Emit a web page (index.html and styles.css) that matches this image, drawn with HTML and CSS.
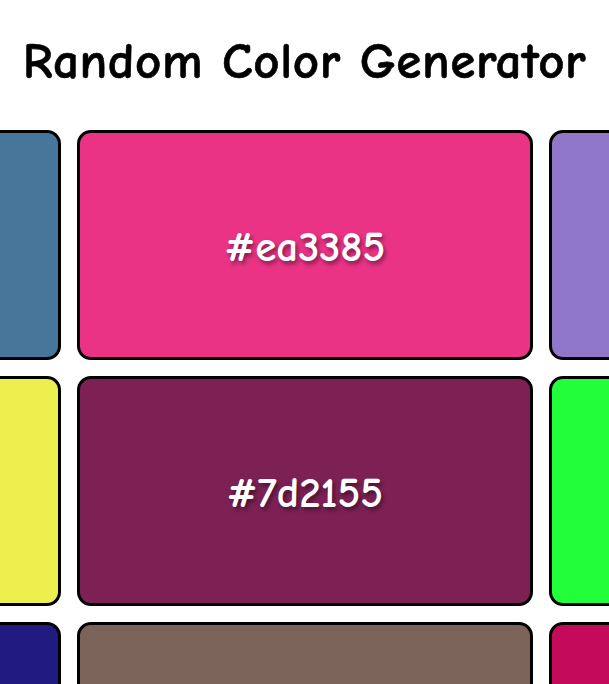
FILE: index.html
```html
<!DOCTYPE html>
<html>
<head>
<meta charset="utf-8">
<link rel="stylesheet" href="styles.css">
</head>
<body>
<h1 class="title">Random Color Generator</h1>
<div class="stage">
  <div class="grid">
    <div class="card" style="background:#47769a"></div>
    <div class="card" style="background:#ea3385"><span class="hex">#ea3385</span></div>
    <div class="card" style="background:#9177c9"></div>
    <div class="card" style="background:#ecef4e"></div>
    <div class="card" style="background:#7d2155"><span class="hex">#7d2155</span></div>
    <div class="card" style="background:#22ff3a"></div>
    <div class="card" style="background:#211a80"></div>
    <div class="card" style="background:#7b6359"></div>
    <div class="card" style="background:#c40a5a"></div>
  </div>
</div>
</body>
</html>
```
FILE: styles.css
```css
html, body {
  margin: 0;
  padding: 0;
  background: #ffffff;
  overflow: hidden;
}
body {
  font-family: "Comic Sans MS", "Comic Neue", "DejaVu Sans", sans-serif;
}
.title {
  margin: 0;
  height: 130px;
  display: flex;
  align-items: center;
  justify-content: center;
  font-size: 51px;
  font-weight: bold;
  color: #000;
  padding-bottom: 8px;
  box-sizing: border-box;
  letter-spacing: 0.6px;
  -webkit-text-stroke: 0.6px #000;
}
.stage {
  display: flex;
  justify-content: center;
  padding-left: 1px;
}
.grid {
  flex: none;
  display: grid;
  grid-template-columns: repeat(3, 456px);
  grid-auto-rows: 230px;
  gap: 16px;
}
.card {
  box-sizing: border-box;
  border: 3px solid #000;
  border-radius: 14px;
  display: flex;
  align-items: center;
  justify-content: center;
}
.hex {
  color: #fff;
  font-size: 43px;
  font-weight: 600;
  text-shadow: 2px 3px 4px rgba(0, 0, 0, 0.45);
  padding-top: 4px;
}
```
